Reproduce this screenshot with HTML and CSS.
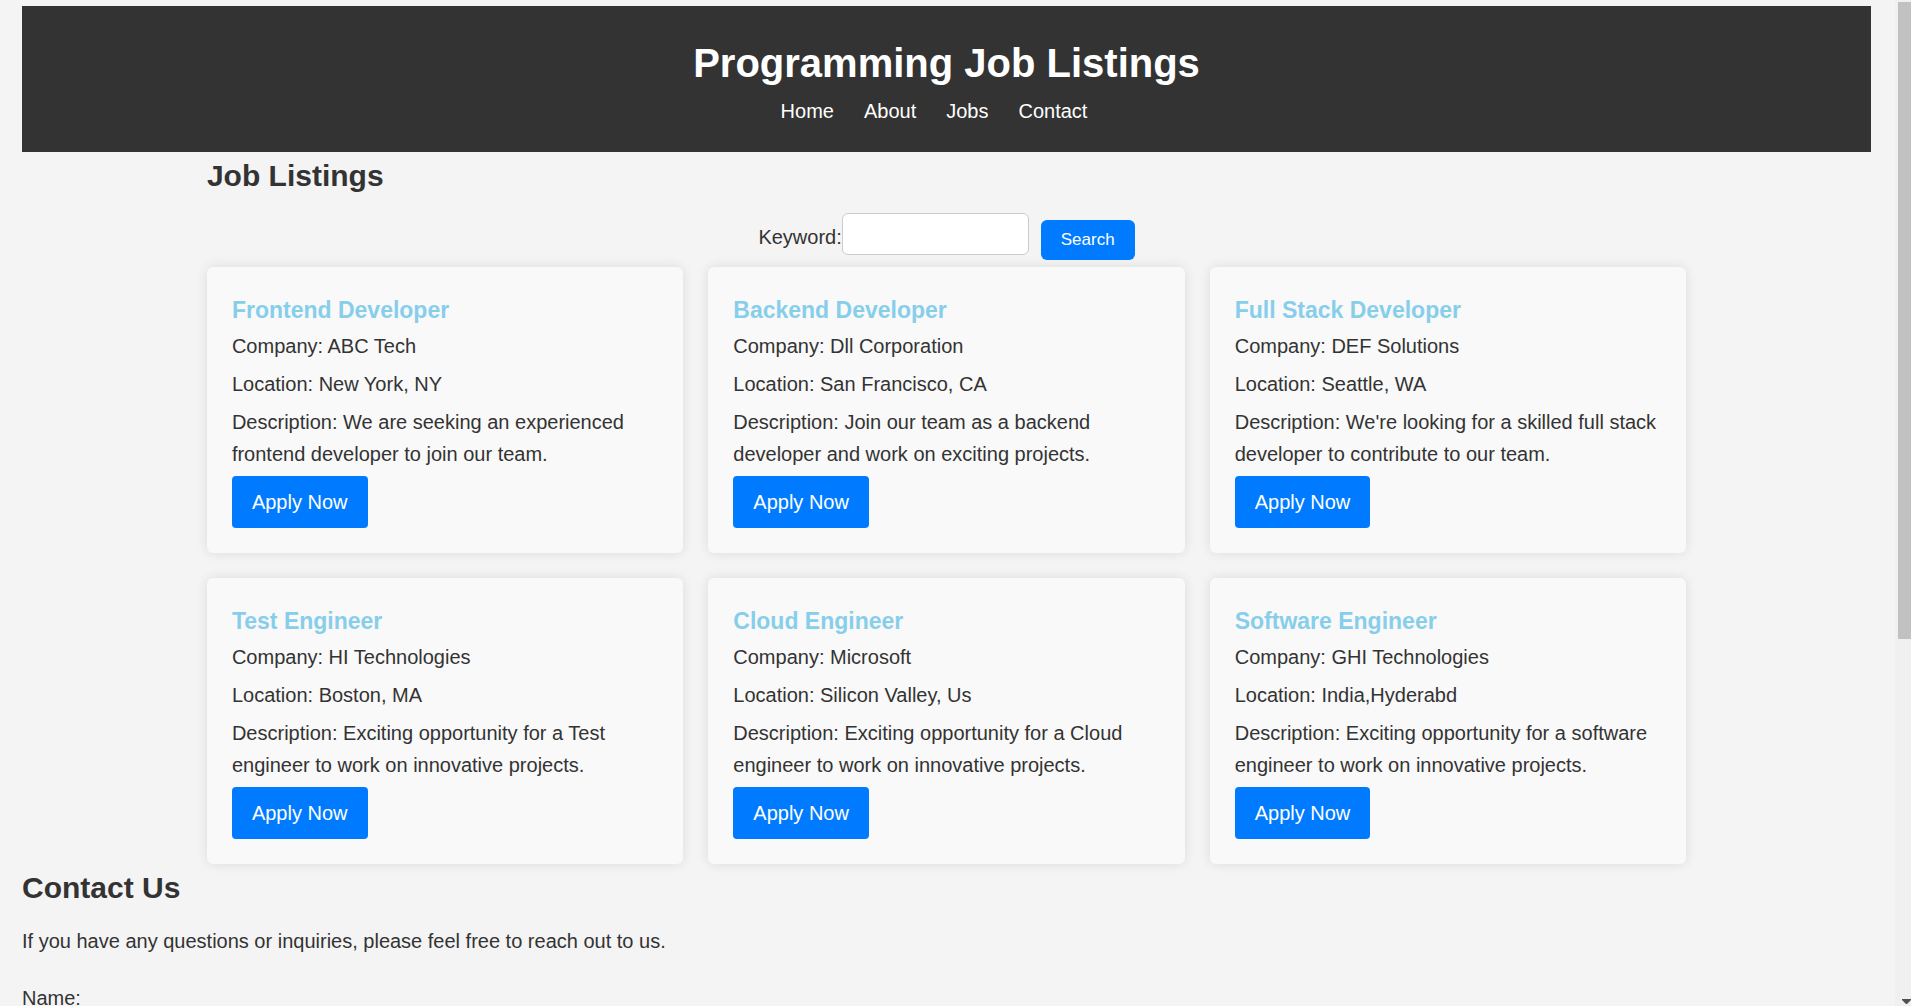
FILE: index.html
```html
<!DOCTYPE html>
<html lang="en">
<head>
<meta charset="utf-8">
<title>Programming Job Listings</title>
<link rel="stylesheet" href="styles.css">
</head>
<body>
<div class="page">
  <header class="site-header">
    <h1 class="site-title">Programming Job Listings</h1>
    <nav class="site-nav">
      <a href="#home">Home</a>
      <a href="#about">About</a>
      <a href="#jobs">Jobs</a>
      <a href="#contact">Contact</a>
    </nav>
  </header>
  <main class="jobs" id="jobs">
    <h2 class="section-title">Job Listings</h2>
    <form class="search">
      <label class="search-label" for="keyword">Keyword:</label>
      <input class="search-input" type="text" id="keyword">
      <button class="search-button" type="button">Search</button>
    </form>
    <div class="job-grid">
      <article class="job">
        <h3 class="job-title">Frontend Developer</h3>
        <p>Company: ABC Tech</p>
        <p>Location: New York, NY</p>
        <p>Description: We are seeking an experienced frontend developer to join our team.</p>
        <a class="apply" href="#apply">Apply Now</a>
      </article>
      <article class="job">
        <h3 class="job-title">Backend Developer</h3>
        <p>Company: Dll Corporation</p>
        <p>Location: San Francisco, CA</p>
        <p>Description: Join our team as a backend developer and work on exciting projects.</p>
        <a class="apply" href="#apply">Apply Now</a>
      </article>
      <article class="job">
        <h3 class="job-title">Full Stack Developer</h3>
        <p>Company: DEF Solutions</p>
        <p>Location: Seattle, WA</p>
        <p>Description: We're looking for a skilled full stack developer to contribute to our team.</p>
        <a class="apply" href="#apply">Apply Now</a>
      </article>
      <article class="job">
        <h3 class="job-title">Test Engineer</h3>
        <p>Company: HI Technologies</p>
        <p>Location: Boston, MA</p>
        <p>Description: Exciting opportunity for a Test engineer to work on innovative projects.</p>
        <a class="apply" href="#apply">Apply Now</a>
      </article>
      <article class="job">
        <h3 class="job-title">Cloud Engineer</h3>
        <p>Company: Microsoft</p>
        <p>Location: Silicon Valley, Us</p>
        <p>Description: Exciting opportunity for a Cloud engineer to work on innovative projects.</p>
        <a class="apply" href="#apply">Apply Now</a>
      </article>
      <article class="job">
        <h3 class="job-title">Software Engineer</h3>
        <p>Company: GHI Technologies</p>
        <p>Location: India,Hyderabd</p>
        <p>Description: Exciting opportunity for a software engineer to work on innovative projects.</p>
        <a class="apply" href="#apply">Apply Now</a>
      </article>
    </div>
  </main>
  <section class="contact" id="contact">
    <h2 class="section-title">Contact Us</h2>
    <p class="contact-intro">If you have any questions or inquiries, please feel free to reach out to us.</p>
    <form class="contact-form">
      <label for="name">Name:</label>
      <input class="contact-input" type="text" id="name">
    </form>
  </section>
</div>
<div class="scrollbar" aria-hidden="true">
  <div class="scrollbar-thumb"></div>
  <svg class="scrollbar-arrow" width="9" height="5" viewBox="0 0 9 5"><path d="M0 0H9V1L5 5H4L0 1Z" fill="#505050"/></svg>
</div>
</body>
</html>
```
FILE: styles.css
```css
* {
  box-sizing: border-box;
}

body {
  margin: 0;
  display: flex;
  height: 100vh;
  overflow: hidden;
  background: #f4f4f4;
  color: #333;
  font: 20px/32px "Liberation Sans", Arial, sans-serif;
}

h1, h2, h3, p {
  margin: 0;
}

.page {
  flex: 1;
  min-width: 0;
  padding: 6px 24px 0 22px;
}

.site-header {
  padding: 25px;
  background: #333;
  color: #fff;
  text-align: center;
}

.site-title {
  font-size: 40px;
  line-height: 64px;
}

.site-nav {
  display: flex;
  justify-content: center;
  gap: 30px;
  padding-right: 25px;
}

.site-nav a {
  color: #fff;
  text-decoration: none;
}

.jobs {
  width: 80%;
  margin: 0 auto;
}

.section-title {
  margin-bottom: 13px;
  font-size: 30px;
  line-height: 48px;
}

.search {
  display: flex;
  justify-content: center;
  align-items: flex-start;
  margin-bottom: 7px;
}

.search-label {
  padding-top: 8px;
}

.search-input {
  width: 187px;
  height: 42px;
  padding: 10px;
  border: 1px solid #ccc;
  border-radius: 6px;
  background: #fff;
  font: inherit;
  font-size: 17px;
}

.search-button {
  height: 40px;
  margin: 7px 0 0 12px;
  padding: 0 20px;
  border: 0;
  border-radius: 6px;
  background: #007bff;
  color: #fff;
  font: inherit;
  font-size: 17px;
}

.job-grid {
  display: grid;
  grid-template-columns: repeat(3, 1fr);
  gap: 25px;
}

.job {
  padding: 25px;
  border-radius: 6px;
  background: #f9f9f9;
  box-shadow: 0 0 12px rgba(0, 0, 0, 0.1);
}

.job-title {
  margin-bottom: 2px;
  color: #87ceeb;
  font-size: 23px;
  line-height: 36px;
}

.job p {
  margin-bottom: 6px;
}

.apply {
  display: block;
  width: fit-content;
  padding: 10px 20px;
  border-radius: 4px;
  background: #007bff;
  color: #fff;
  text-decoration: none;
}

.contact-intro {
  margin-bottom: 25px;
}

.contact-form {
  display: flex;
  flex-direction: column;
  align-items: flex-start;
}

.contact-input {
  height: 42px;
  border: 1px solid #ccc;
  border-radius: 6px;
  font: inherit;
}

.scrollbar {
  display: flex;
  flex-direction: column;
  justify-content: space-between;
  width: 16px;
  padding: 2px 0 2px 3px;
  background: #f0f0f0;
}

.scrollbar-thumb {
  height: 63.6%;
  background: #c1c1c1;
}

.scrollbar-arrow {
  align-self: flex-end;
}
```
